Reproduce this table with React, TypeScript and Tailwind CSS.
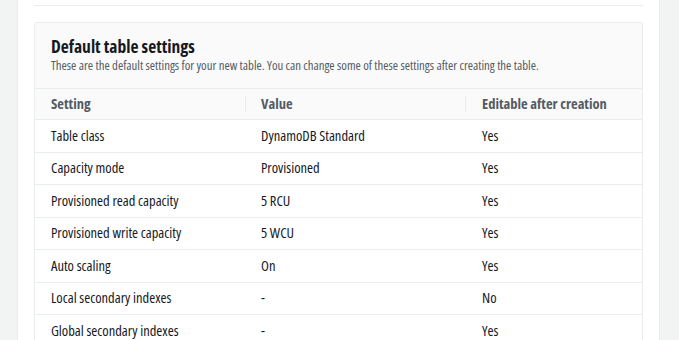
const rows = [
  { setting: "Table class", value: "DynamoDB Standard", editable: "Yes" },
  { setting: "Capacity mode", value: "Provisioned", editable: "Yes" },
  { setting: "Provisioned read capacity", value: "5 RCU", editable: "Yes" },
  { setting: "Provisioned write capacity", value: "5 WCU", editable: "Yes" },
  { setting: "Auto scaling", value: "On", editable: "Yes" },
  { setting: "Local secondary indexes", value: "-", editable: "No" },
  { setting: "Global secondary indexes", value: "-", editable: "Yes" },
  { setting: "Encryption key management", value: "Owned by Amazon DynamoDB", editable: "Yes" },
];

export default function App() {
  return (
    <div className="h-[340px] overflow-hidden bg-[#f2f3f3] pl-[17px] pr-[19px] font-['Open_Sans',sans-serif] font-stretch-condensed text-[#16191f]">
      <div className="h-full border-x border-[#eaeded] bg-white px-4">
        <div className="h-[6px] border-b border-[#eaeded]" />
        <div className="mt-4 overflow-hidden rounded-[2px] border border-[#eaeded] bg-[#fafafa]">
          <div className="px-4 pb-[14px] pt-[12px]">
            <h2 className="text-[17.5px] font-bold leading-[22px]">Default table settings</h2>
            <p className="text-[12.75px] leading-[17px] text-[#545b64]">
              These are the default settings for your new table. You can change some of these settings after creating the table.
            </p>
          </div>
          <table className="w-full table-fixed border-collapse text-[14.5px]">
            <colgroup>
              <col className="w-[210px]" />
              <col className="w-[220px]" />
              <col />
            </colgroup>
            <thead>
              <tr className="h-[31px] border-y border-[#eaeded] bg-[#fafafa] text-left text-[#545b64]">
                <th className="pl-4 font-bold">Setting</th>
                <th className="font-bold">
                  <div className="flex items-center">
                    <span className="mr-[15px] h-4 w-px bg-[#eaeded]" />
                    Value
                  </div>
                </th>
                <th className="font-bold">
                  <div className="flex items-center">
                    <span className="mr-4 h-4 w-px bg-[#eaeded]" />
                    Editable after creation
                  </div>
                </th>
              </tr>
            </thead>
            <tbody className="bg-white">
              {rows.map((r) => (
                <tr key={r.setting} className="h-[32.5px] border-b border-[#eaeded]">
                  <td className="pl-4">{r.setting}</td>
                  <td className="pl-4">{r.value}</td>
                  <td className="pl-[17px]">{r.editable}</td>
                </tr>
              ))}
            </tbody>
          </table>
        </div>
      </div>
    </div>
  );
}
